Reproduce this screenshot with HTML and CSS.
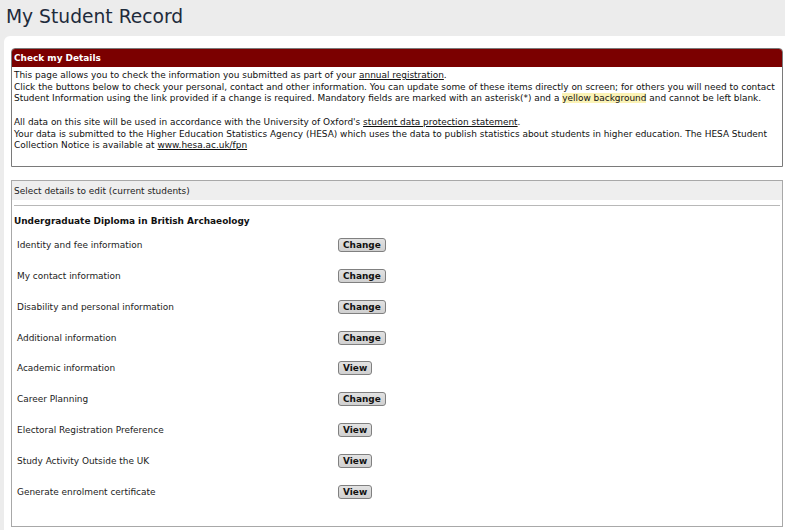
FILE: index.html
```html
<!DOCTYPE html>
<html>
<head>
<meta charset="utf-8">
<link rel="stylesheet" href="styles.css">
</head>
<body>
<h1 class="title">My Student Record</h1>
<div class="panel">
  <div class="box details">
    <div class="box-head">Check my Details</div>
    <div class="box-body">
      <p>This page allows you to check the information you submitted as part of your <a href="#">annual registration</a>.<br>
      Click the buttons below to check your personal, contact and other information. You can update some of these items directly on screen; for others you will need to contact Student Information using the link provided if a change is required. Mandatory fields are marked with an asterisk(*) and a <span class="hl">yellow background</span> and cannot be left blank.</p>
      <p>All data on this site will be used in accordance with the University of Oxford's <a href="#">student data protection statement</a>.<br>
      Your data is submitted to the Higher Education Statistics Agency (HESA) which uses the data to publish statistics about students in higher education. The HESA Student Collection Notice is available at <a href="#">www.hesa.ac.uk/fpn</a></p>
    </div>
  </div>
  <div class="box edit">
    <div class="edit-head">Select details to edit (current students)</div>
    <div class="edit-body">
      <h2 class="course">Undergraduate Diploma in British Archaeology</h2>
      <div class="row"><span class="label">Identity and fee information</span><button class="btn">Change</button></div>
      <div class="row"><span class="label">My contact information</span><button class="btn">Change</button></div>
      <div class="row"><span class="label">Disability and personal information</span><button class="btn">Change</button></div>
      <div class="row"><span class="label">Additional information</span><button class="btn">Change</button></div>
      <div class="row"><span class="label">Academic information</span><button class="btn">View</button></div>
      <div class="row"><span class="label">Career Planning</span><button class="btn">Change</button></div>
      <div class="row"><span class="label">Electoral Registration Preference</span><button class="btn">View</button></div>
      <div class="row"><span class="label">Study Activity Outside the UK</span><button class="btn">View</button></div>
      <div class="row"><span class="label">Generate enrolment certificate</span><button class="btn">View</button></div>
    </div>
  </div>
</div>
</body>
</html>
```

FILE: styles.css
```css
html, body {
  margin: 0;
  padding: 0;
  height: 100%;
}
body {
  background: #ececec;
  font-family: "DejaVu Sans", Verdana, sans-serif;
  font-size: 8.95px;
  color: #111;
  overflow: hidden;
}
.title {
  margin: 0;
  padding: 5px 0 0 6px;
  height: 36px;
  box-sizing: border-box;
  font-size: 18.7px;
  font-weight: normal;
  color: #1e2b3b;
  line-height: 24px;
}
.panel {
  margin-left: 4px;
  background: #fff;
  border-radius: 6px 0 0 0;
  padding: 12px 2px 2px 7px;
  height: 600px;
}
.box {
  box-sizing: border-box;
}
.details {
  border: 1px solid #7a7a7a;
  border-radius: 4px 4px 0 0;
}
.box-head {
  background: #7b0000;
  color: #fff;
  font-weight: bold;
  padding: 4px 2px 3px 2px;
  line-height: 11px;
  border-radius: 3px 3px 0 0;
}
.box-body {
  padding: 3px 2px 14px 2px;
  line-height: 11.7px;
}
.box-body p {
  margin: 0 0 11.7px 0;
}
.box-body p:last-child {
  margin-bottom: 0;
}
a {
  color: #111;
  text-decoration: underline;
}
.hl {
  background: #fbf3b6;
}
.edit {
  margin-top: 13px;
  border: 1px solid #a8a8a8;
  height: 347px;
}
.edit-head {
  background: #eeeeee;
  padding: 5px 2px 3px 2px;
  line-height: 11px;
  color: #222;
}
.edit-body {
  margin: 5px 2px 0 2px;
  border-top: 1px solid #b8b8b8;
}
.course {
  margin: 0 0 3px 0;
  font-size: 8.95px;
  font-weight: bold;
  padding: 10px 0 0 0;
  line-height: 11px;
  color: #111;
}
.row {
  display: flex;
  align-items: center;
  height: 30.8px;
  padding-left: 3px;
  color: #222;
}
.label {
  width: 321px;
}
.btn {
  font-family: "DejaVu Sans", Verdana, sans-serif;
  font-size: 8.95px;
  font-weight: bold;
  color: #111;
  background: linear-gradient(#e2e2e2, #d0d0d0);
  border: 1px solid #808080;
  border-radius: 3px;
  padding: 0 4px;
  height: 14px;
  line-height: 12px;
}
```
